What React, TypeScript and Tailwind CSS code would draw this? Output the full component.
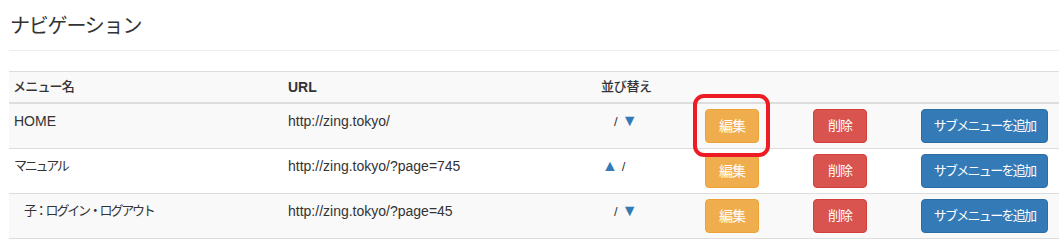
import React from 'react';

type MenuRow = {
  name: string;
  url: string;
  up: boolean;
  down: boolean;
  indent?: boolean;
};

const rows: MenuRow[] = [
  { name: 'HOME', url: 'http://zing.tokyo/', up: false, down: true },
  { name: 'マニュアル', url: 'http://zing.tokyo/?page=745', up: true, down: false },
  { name: '子：ログイン・ログアウト', url: 'http://zing.tokyo/?page=45', up: false, down: true, indent: true },
];

const jp = "font-['Liberation_Sans','Noto_Sans_CJK_JP',sans-serif]";

const App: React.FC = () => {
  return (
    <div className={`relative w-[1059px] h-[243px] bg-white text-[#333] overflow-hidden ${jp}`}>
      <div className="pl-[9px]">
        <div className="pt-[13px] pb-[10px] border-b border-[#eee]">
          <h2 className="text-[20px] leading-[27px] tracking-[-1.2px] pl-[1px]">ナビゲーション</h2>
        </div>

        <table className="mt-[20px] w-[1050px] border-collapse table-fixed">
          <colgroup>
            <col className="w-[274px]" />
            <col className="w-[313px]" />
            <col className="w-[104px]" />
            <col className="w-[108px]" />
            <col className="w-[108px]" />
            <col className="w-[143px]" />
          </colgroup>
          <thead>
            <tr className="bg-[#f9f9f9] border-t border-[#ddd] border-b-2">
              <th className="text-left font-medium text-[13px] leading-[20px] pl-[4px] py-[5px] tracking-[-0.8px]">メニュー名</th>
              <th className="text-left font-bold text-[14px] leading-[20px] pl-[5px] py-[5px]">URL</th>
              <th className="text-left font-medium text-[13px] leading-[20px] pl-[5px] py-[5px] tracking-[-0.3px]">並び替え</th>
              <th />
              <th />
              <th />
            </tr>
          </thead>
          <tbody>
            {rows.map((row, i) => (
              <tr key={row.url} className={`border-b border-[#ddd] ${i % 2 === 0 ? 'bg-[#f9f9f9]' : 'bg-white'}`}>
                <td className={`align-top pt-[7px] text-[13px] leading-[20px] tracking-[-2.2px] ${row.indent ? 'pl-[15px]' : 'pl-[5px]'}`}>
                  {row.name === 'HOME' ? <span className="tracking-normal text-[14px]">HOME</span> : row.name}
                </td>
                <td className="align-top pt-[7px] pl-[5px] text-[14px] leading-[20px]">{row.url}</td>
                <td className={`align-top pt-[7px] text-[13px] leading-[20px] ${row.up ? 'pl-[6px]' : 'pl-[18px]'}`}>
                  {row.up && <span className="text-[#337ab7] text-[16px] leading-[20px] mr-[4px]">▲</span>}
                  <span>/</span>
                  {row.down && <span className="text-[#337ab7] text-[16px] leading-[20px] ml-[4px]">▼</span>}
                </td>
                <td className="py-[5px] pl-[5px]">
                  <button className="h-[34px] w-[54px] rounded-[4px] bg-[#f0ad4e] border border-[#eea236] text-white text-[14px] tracking-[-1px]">
                    編集
                  </button>
                </td>
                <td className="py-[5px] pl-[5px]">
                  <button className="h-[34px] w-[54px] rounded-[4px] bg-[#d9534f] border border-[#d43f3a] text-white text-[13px] tracking-[-1px]">
                    削除
                  </button>
                </td>
                <td className="py-[5px] pl-[5px]">
                  <button className="h-[34px] w-[127px] rounded-[4px] bg-[#337ab7] border border-[#2e6da4] text-white text-[13px] tracking-[-1.7px]">
                    サブメニューを追加
                  </button>
                </td>
              </tr>
            ))}
          </tbody>
        </table>
      </div>

      {/* annotation highlight around the first edit button */}
      <div className="absolute left-[693px] top-[94px] w-[77px] h-[63px] border-[4px] border-[#ed1c24] rounded-[11px] pointer-events-none" />
    </div>
  );
};

export default App;
